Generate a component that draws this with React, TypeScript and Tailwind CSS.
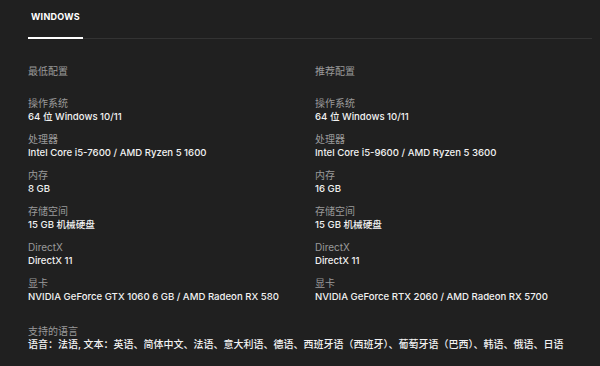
import React from "react";

const minSpecs = [
  ["操作系统", "64 位 Windows 10/11"],
  ["处理器", "Intel Core i5-7600 / AMD Ryzen 5 1600"],
  ["内存", "8 GB"],
  ["存储空间", "15 GB 机械硬盘"],
  ["DirectX", "DirectX 11"],
  ["显卡", "NVIDIA GeForce GTX 1060 6 GB / AMD Radeon RX 580"],
];

const recSpecs = [
  ["操作系统", "64 位 Windows 10/11"],
  ["处理器", "Intel Core i5-9600 / AMD Ryzen 5 3600"],
  ["内存", "16 GB"],
  ["存储空间", "15 GB 机械硬盘"],
  ["DirectX", "DirectX 11"],
  ["显卡", "NVIDIA GeForce RTX 2060 / AMD Radeon RX 5700"],
];

function SpecColumn({ title, specs }: { title: string; specs: string[][] }) {
  return (
    <div className="flex flex-col">
      <div className="text-[#9a9a9a] leading-[14px] mb-[19px]">{title}</div>
      <div className="flex flex-col gap-[10px]">
        {specs.map(([label, value]) => (
          <div key={label} className="flex flex-col">
            <span className="text-[#9a9a9a] leading-[13px]">{label}</span>
            <span className="text-[#f2f2f2] text-[9.6px] font-medium leading-[13px]">{value}</span>
          </div>
        ))}
      </div>
    </div>
  );
}

export default function App() {
  return (
    <div
      className="w-[600px] h-[366px] bg-[#202020] pl-[28px] pr-[8px] text-[10px] overflow-hidden"
      style={{ fontFamily: "Inter, 'Noto Sans CJK SC', sans-serif" }}
    >
      {/* platform tabs */}
      <div className="flex border-b border-[#333333] h-[39px]">
        <div className="relative px-[3px] pt-[10px] text-[9px] font-bold tracking-[0.03em] text-white">
          WINDOWS
          <div className="absolute left-0 right-0 -bottom-[1px] h-[2px] bg-white" />
        </div>
      </div>

      <div className="grid grid-cols-[287px_1fr] mt-[25px]">
        <SpecColumn title="最低配置" specs={minSpecs} />
        <SpecColumn title="推荐配置" specs={recSpecs} />
      </div>

      <div className="flex flex-col mt-[22px]">
        <span className="text-[#9a9a9a] leading-[13px]">支持的语言</span>
        <span className="text-[#f2f2f2] font-medium leading-[13px]">
          语音：法语, 文本：英语、简体中文、法语、意大利语、德语、西班牙语（西班牙）、葡萄牙语（巴西）、韩语、俄语、日语
        </span>
      </div>
    </div>
  );
}
